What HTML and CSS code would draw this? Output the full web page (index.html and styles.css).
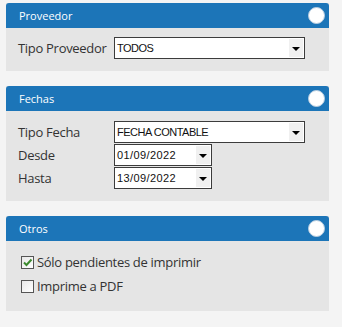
FILE: index.html
```html
<!DOCTYPE html>
<html lang="es">

<head>
    <meta charset="UTF-8">
    <title>Filtros</title>
    <link rel="stylesheet" href="styles.css">
</head>

<body>
    <div class="panel">
        <div class="panel-head">
            <span>Proveedor</span>
            <span class="dot"></span>
        </div>
        <div class="panel-body">
            <div class="row">
                <label>Tipo Proveedor</label>
                <div class="select wide"><span>TODOS</span><span class="arrow"></span></div>
            </div>
        </div>
    </div>

    <div class="panel">
        <div class="panel-head">
            <span>Fechas</span>
            <span class="dot"></span>
        </div>
        <div class="panel-body rows">
            <div class="row">
                <label>Tipo Fecha</label>
                <div class="select wide"><span>FECHA CONTABLE</span><span class="arrow"></span></div>
            </div>
            <div class="row">
                <label>Desde</label>
                <div class="select date"><span>01/09/2022</span><span class="arrow"></span></div>
            </div>
            <div class="row">
                <label>Hasta</label>
                <div class="select date"><span>13/09/2022</span><span class="arrow"></span></div>
            </div>
        </div>
    </div>

    <div class="panel">
        <div class="panel-head">
            <span>Otros</span>
            <span class="dot"></span>
        </div>
        <div class="panel-body checks">
            <div class="check">
                <span class="box">
                    <svg width="11" height="11" viewBox="0 0 11 11">
                        <path d="M2 5.5 L4.5 8 L9.5 2.5" fill="none" stroke="#3c8a2e" stroke-width="2"/>
                    </svg>
                </span>
                <span>Sólo pendientes de imprimir</span>
            </div>
            <div class="check">
                <span class="box"></span>
                <span>Imprime a PDF</span>
            </div>
        </div>
    </div>
</body>

</html>
```

FILE: styles.css
```css
html,
body {
    margin: 0;
    padding: 0;
}

body {
    background-color: #f4f4f4;
    padding: 3px 0 0 6px;
    width: 323px;
    font-family: "Open Sans", sans-serif;
    color: #333;
}

.panel {
    margin-bottom: 15px;
    background-color: #e5e5e5;
}

.panel-head {
    height: 25px;
    background-color: #1c75b8;
    border-radius: 3px 3px 0 0;
    display: flex;
    align-items: center;
    justify-content: space-between;
    padding: 0 4px 0 13px;
    color: #fff;
    font-size: 11px;
}

.dot {
    width: 15px;
    height: 15px;
    border-radius: 50%;
    background-color: #fff;
    border: 1px solid #b8cde0;
}

.panel-body {
    padding: 9px 12px 12px 12px;
}

.panel-body.rows {
    padding-top: 10px;
    display: flex;
    flex-direction: column;
    gap: 1px;
}

.row {
    display: flex;
    align-items: center;
    height: 22px;
}

.row label {
    width: 96px;
    font-size: 13px;
    letter-spacing: -0.3px;
}

.select {
    box-sizing: border-box;
    height: 22px;
    border: 1px solid #3c3c3c;
    background-color: #fff;
    display: flex;
    justify-content: space-between;
    font-family: "Liberation Sans", sans-serif;
    font-size: 11px;
    color: #111;
}

.select span:first-child {
    padding: 0 0 0 2px;
    line-height: 20px;
}

.select.wide {
    width: 191px;
}

.select.wide span:first-child {
    letter-spacing: -0.5px;
}

.select.date {
    width: 98px;
}

.select.date span:first-child {
    letter-spacing: 0.4px;
}

.arrow {
    width: 14px;
    margin: 1px;
    background-color: #f0f0f0;
    position: relative;
}

.arrow::after {
    content: "";
    position: absolute;
    left: 3px;
    top: 8px;
    border-left: 4px solid transparent;
    border-right: 4px solid transparent;
    border-top: 4px solid #000;
}

.panel-body.checks {
    padding: 12px 12px 15px 15px;
    display: flex;
    flex-direction: column;
    gap: 6px;
    height: 43px;
}

.check {
    display: flex;
    align-items: center;
    gap: 3px;
    height: 18px;
    font-size: 13px;
    letter-spacing: -0.3px;
}

.box {
    box-sizing: border-box;
    width: 13px;
    height: 13px;
    border: 1px solid #555;
    background: linear-gradient(135deg, #e8e8e8, #fff);
    display: flex;
    align-items: center;
    justify-content: center;
}
```
